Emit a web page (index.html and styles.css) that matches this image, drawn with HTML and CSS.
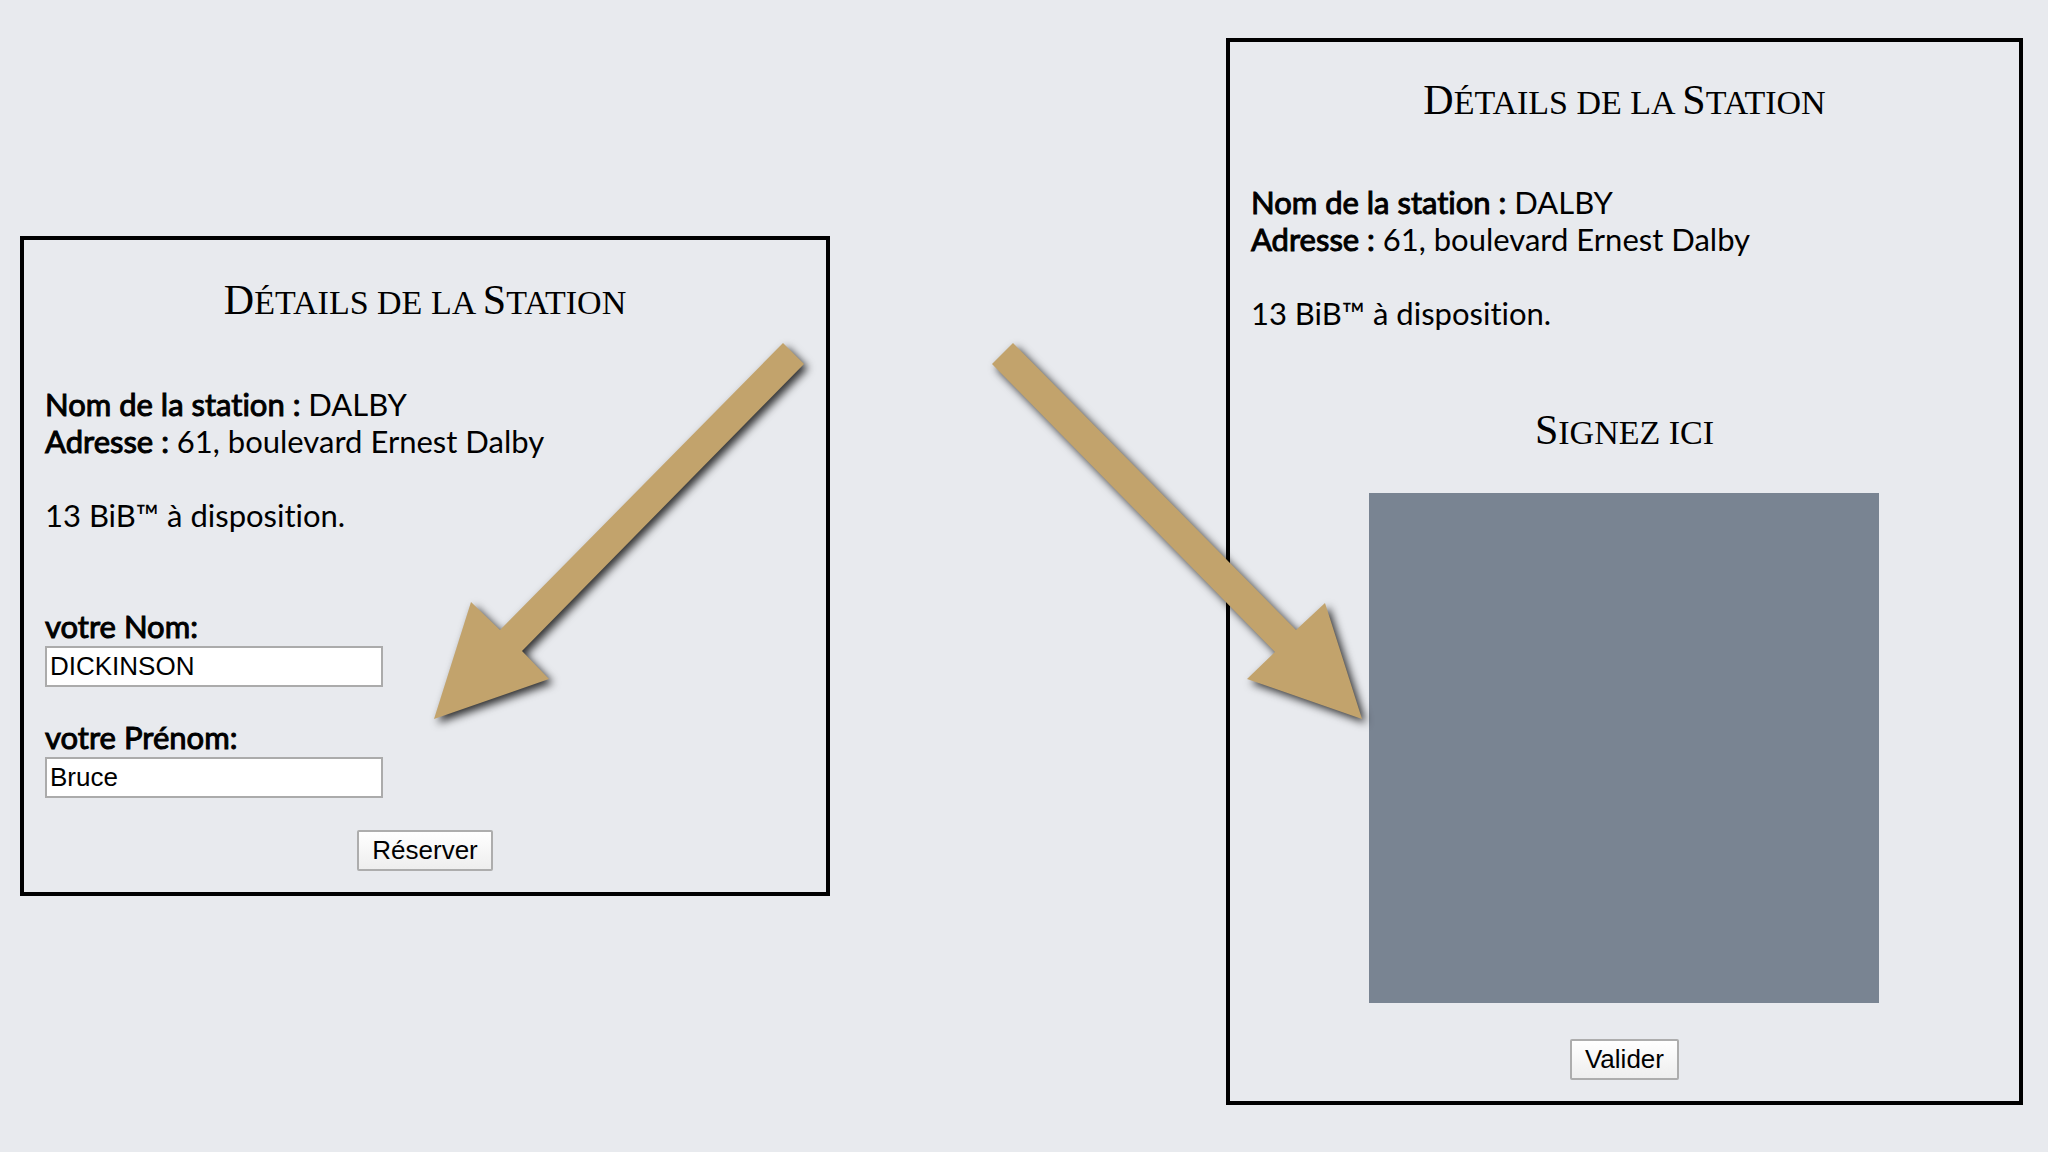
FILE: index.html
```html
<!DOCTYPE html>
<html lang="fr">
<head>
  <meta charset="utf-8">
  <title>Détails de la Station</title>
  <link rel="stylesheet" href="styles.css">
</head>
<body>
  <main class="steps">
    <section class="panel panel-booking">
      <h2 class="title"><span class="initial">D</span>étails de la <span class="initial">S</span>tation</h2>
      <div class="info">
        <p class="line"><strong class="strong">Nom de la station :</strong> DALBY</p>
        <p class="line"><strong class="strong">Adresse :</strong> 61, boulevard Ernest Dalby</p>
        <p class="line available">13 BiB™ à disposition.</p>
      </div>
      <form class="form">
        <div class="field">
          <label class="strong" for="nom">votre Nom:</label>
          <input class="input" id="nom" type="text" value="DICKINSON">
        </div>
        <div class="field">
          <label class="strong" for="prenom">votre Prénom:</label>
          <input class="input" id="prenom" type="text" value="Bruce">
        </div>
        <button class="button" type="button">Réserver</button>
      </form>
    </section>

    <section class="panel panel-signature">
      <h2 class="title"><span class="initial">D</span>étails de la <span class="initial">S</span>tation</h2>
      <div class="info">
        <p class="line"><strong class="strong">Nom de la station :</strong> DALBY</p>
        <p class="line"><strong class="strong">Adresse :</strong> 61, boulevard Ernest Dalby</p>
        <p class="line available">13 BiB™ à disposition.</p>
      </div>
      <h2 class="title title-sign"><span class="initial">S</span>ignez ici</h2>
      <canvas class="pad" width="510" height="510"></canvas>
      <button class="button" type="button">Valider</button>
    </section>
  </main>

  <svg class="arrows" viewBox="0 0 2048 1152" aria-hidden="true">
    <path class="arrow" d="M783 343L804 364L522 651L549 679L434 719L471 602L500 630Z"/>
    <path class="arrow" d="M1013 343L992 364L1275 652L1247 679L1362 719L1325 603L1296 630Z"/>
  </svg>
</body>
</html>
```
FILE: styles.css
```css
* {
  box-sizing: border-box;
}

body {
  position: relative;
  min-height: 100vh;
  margin: 0;
  background: #e8eaee;
  color: #000;
  font: 31px/37px Lato, "Liberation Sans", sans-serif;
  font-variant-ligatures: none;
}

.steps {
  display: grid;
  grid-template-columns: 810fr 797fr;
  column-gap: 19.33vw;
  align-items: start;
  padding: 38px 25px 38px 20px;
}

.panel {
  display: flex;
  flex-direction: column;
  align-items: center;
  padding: 36px 21px 21px;
  border: 4px solid #000;
}

.panel-booking {
  margin-top: 198px;
}

.panel-signature {
  padding-top: 34px;
}

.title {
  margin: 0 0 59px;
  font: 34px/48px "Liberation Serif", serif;
  text-transform: uppercase;
}

.panel-signature .title {
  margin-bottom: 57px;
}

.initial {
  font-size: 42px;
}

.panel-signature .title-sign {
  margin: 74px 0 36px;
}

.info,
.form {
  align-self: stretch;
}

.line {
  margin: 0;
}

.available {
  margin-top: 37px;
}

/* Regular glyphs thickened, keeping the regular widths */
.strong {
  font-weight: 400;
  -webkit-text-stroke: 1px #000;
}

.form {
  display: flex;
  flex-direction: column;
  align-items: center;
  margin-top: 74px;
}

.field {
  display: flex;
  flex-direction: column;
  gap: 1px;
  align-self: stretch;
  margin-bottom: 32px;
}

.input,
.button {
  height: 41px;
  color: #000;
  font: 26px/30px "Liberation Sans", Arial, sans-serif;
}

.input {
  width: 338px;
  max-width: 100%;
  padding: 0 3px;
  border: 2px solid #ababab;
  background: #fff;
}

.button {
  padding: 0 13px 2px;
  border: 2px solid #adadad;
  border-radius: 2px;
  background: linear-gradient(#fff, #eee);
}

.pad {
  max-width: 100%;
  margin-bottom: 36px;
  background: #798492;
}

.arrows {
  position: absolute;
  top: 0;
  left: 0;
  width: 100%;
  pointer-events: none;
}

.arrow {
  fill: #c2a36c;
  filter: drop-shadow(4px 4px 4px rgba(0, 0, 0, 0.8));
}
```
